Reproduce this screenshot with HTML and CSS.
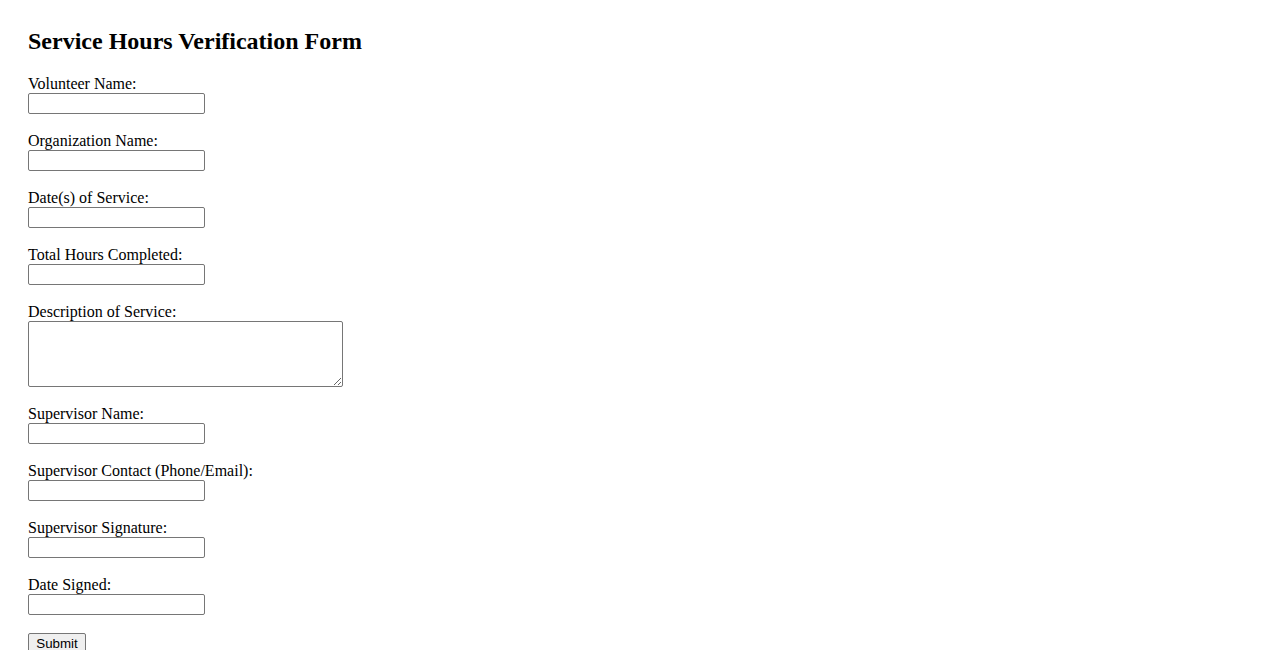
FILE: index.html
```html
<!DOCTYPE html>
<html>
<head>
<meta charset="utf-8">
<title>Service Hours Verification Form</title>
<link rel="stylesheet" href="styles.css">
</head>
<body>
<h2 class="title">Service Hours Verification Form</h2>
<form class="form">
  <div class="field"><label class="label">Volunteer Name:</label><input class="input" type="text"></div>
  <div class="field"><label class="label">Organization Name:</label><input class="input" type="text"></div>
  <div class="field"><label class="label">Date(s) of Service:</label><input class="input" type="text"></div>
  <div class="field"><label class="label">Total Hours Completed:</label><input class="input" type="text"></div>
  <div class="field"><label class="label">Description of Service:</label><textarea class="textarea"></textarea></div>
  <div class="field"><label class="label">Supervisor Name:</label><input class="input" type="text"></div>
  <div class="field"><label class="label">Supervisor Contact (Phone/Email):</label><input class="input" type="text"></div>
  <div class="field"><label class="label">Supervisor Signature:</label><input class="input" type="text"></div>
  <div class="field"><label class="label">Date Signed:</label><input class="input" type="text"></div>
  <div class="field"><button class="submit" type="submit">Submit</button></div>
</form>
</body>
</html>
```
FILE: styles.css
```css
html, body {
  background: #fff;
}
body {
  margin: 8px;
  padding: 20px;
  font-family: "Liberation Serif", "Times New Roman", serif;
  font-size: 16px;
  color: #000;
}
.title {
  margin: 0 0 20px;
  font-size: 24px;
  font-weight: bold;
  line-height: 27px;
}
.form {
  display: flex;
  flex-direction: column;
  align-items: flex-start;
}
.field {
  display: flex;
  flex-direction: column;
  align-items: flex-start;
  margin-bottom: 18px;
}
.label {
  display: block;
  line-height: 18px;
  height: 18px;
}
.input {
  box-sizing: border-box;
  width: 177px;
  height: 21px;
  margin: 0;
  border: 1px solid #767676;
  border-radius: 2px;
  padding: 1px 2px;
  background: #fff;
  font: 13.33px "Liberation Sans", Arial, sans-serif;
}
.textarea {
  box-sizing: border-box;
  width: 315px;
  height: 66px;
  margin: 0;
  border: 1px solid #767676;
  border-radius: 2px;
  padding: 2px;
  background: #fff;
  font: 13.33px "Liberation Mono", monospace;
}
.submit {
  box-sizing: border-box;
  width: 58px;
  height: 21px;
  margin: 0;
  padding: 1px 6px;
  border: 1px solid #767676;
  border-radius: 2px;
  background: #efefef;
  color: #000;
  font: 13.33px "Liberation Sans", Arial, sans-serif;
}
```
